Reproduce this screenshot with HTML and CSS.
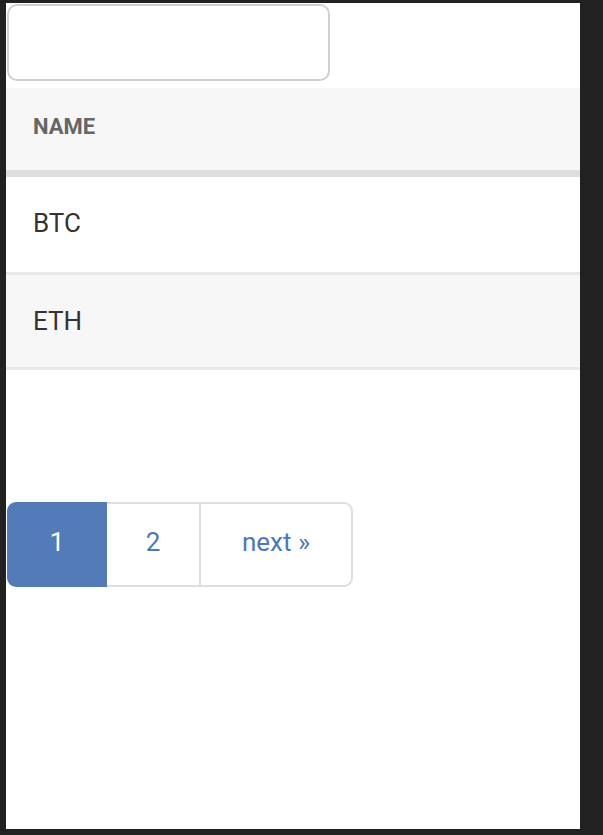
FILE: index.html
```html
<!DOCTYPE html>
<html>
<head>
<meta charset="utf-8">
<link rel="stylesheet" href="styles.css">
</head>
<body>
<div class="frame">
  <input class="search" type="text">
  <table class="coins">
    <thead>
      <tr><th>NAME</th></tr>
    </thead>
    <tbody>
      <tr class="r1"><td>BTC</td></tr>
      <tr class="r2"><td>ETH</td></tr>
    </tbody>
  </table>
  <ul class="pager">
    <li><a class="page active p1">1</a></li>
    <li><a class="page p2">2</a></li>
    <li><a class="page p3">next »</a></li>
  </ul>
</div>
</body>
</html>
```
FILE: styles.css
```css
html, body {
  margin: 0;
  padding: 0;
  background: #212121;
}
body {
  width: 603px;
  height: 835px;
  overflow: hidden;
  font-family: Roboto, "Liberation Sans", sans-serif;
}
.frame {
  margin: 3px 0 0 6px;
  width: 574px;
  height: 826px;
  background: #fff;
  padding-top: 1px;
  box-sizing: border-box;
}
.search {
  display: block;
  margin: 0 0 7px 1px;
  width: 323px;
  height: 77px;
  box-sizing: border-box;
  border: 2px solid #d0d0d0;
  border-radius: 10px;
  background: #fff;
  outline: none;
  padding: 0 12px;
  font-size: 26px;
}
.coins {
  width: 574px;
  border-spacing: 0;
  border-collapse: separate;
}
.coins th {
  text-align: left;
  height: 76px;
  padding: 0 0 6px 27px;
  background: #f7f7f7;
  border-bottom: 7px solid #dedede;
  color: #666;
  font-weight: 700;
  font-size: 22px;
}
.coins td {
  font-size: 26px;
  color: #333;
  border-bottom: 3px solid #e8e8e8;
}
.r1 td {
  height: 92px;
  padding: 0 0 3px 27px;
  background: #fff;
}
.r2 td {
  height: 92px;
  padding: 0 0 0 27px;
  background: #f7f7f7;
}
.pager {
  list-style: none;
  margin: 132px 0 0 1px;
  padding: 0;
  display: flex;
}
.page {
  display: flex;
  align-items: center;
  justify-content: center;
  height: 85px;
  box-sizing: border-box;
  padding-bottom: 6px;
  border: 2px solid #dedede;
  margin-left: -2px;
  font-size: 26px;
  color: #4e77b4;
  background: #fff;
  position: relative;
}
.p1 {
  width: 100px;
  margin-left: 0;
  border-radius: 9px 0 0 9px;
}
.p2 {
  width: 96px;
}
.p3 {
  width: 154px;
  border-radius: 0 9px 9px 0;
}
.active {
  background: #527bb8;
  border-color: #527bb8;
  color: #fff;
  z-index: 1;
}
```
